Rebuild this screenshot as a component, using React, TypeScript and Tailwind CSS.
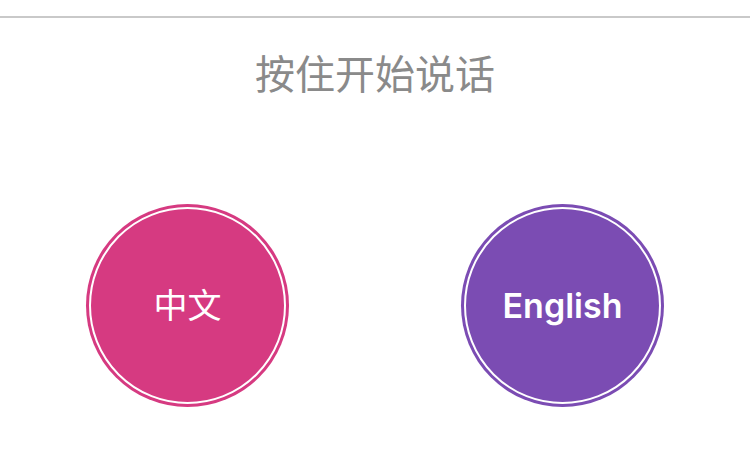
export default function App() {
  return (
    <div className="h-[458px] w-[750px] bg-white overflow-hidden" style={{ fontFamily: '"Inter", "Noto Sans CJK SC", sans-serif' }}>
      <div className="h-4" />
      <div className="h-[2px] bg-[#c9c9c9]" />
      <h1 className="mt-[37px] text-center text-[40px] leading-[40px] text-[#8a8a8a] font-normal">按住开始说话</h1>
      <div className="mt-[109px] flex justify-between pl-[86px] pr-[86px]">
        <LangButton label="中文" color="bg-[#d63a81]" textClass="text-[34px] font-normal" />
        <LangButton label="English" color="bg-[#7b4cb3]" textClass="text-[34px] font-semibold" />
      </div>
    </div>
  );
}

function LangButton({ label, color, textClass }: { label: string; color: string; textClass: string }) {
  return (
    <button className={`h-[203px] w-[203px] rounded-full p-[3px] ${color}`}>
      <div className={`flex h-full w-full items-center justify-center rounded-full border-2 border-white text-white ${textClass}`}>
        {label}
      </div>
    </button>
  );
}
